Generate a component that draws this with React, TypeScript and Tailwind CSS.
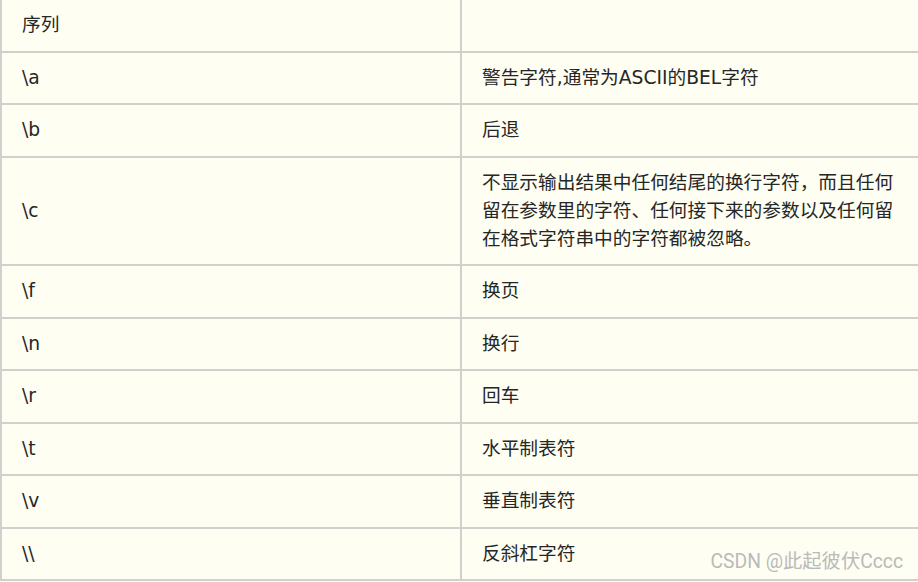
const rows: { seq: string; desc: string[] }[] = [
  { seq: '序列', desc: [''] },
  { seq: '\\a', desc: ['警告字符,通常为ASCII的BEL字符'] },
  { seq: '\\b', desc: ['后退'] },
  {
    seq: '\\c',
    desc: [
      '不显示输出结果中任何结尾的换行字符，而且任何',
      '留在参数里的字符、任何接下来的参数以及任何留',
      '在格式字符串中的字符都被忽略。',
    ],
  },
  { seq: '\\f', desc: ['换页'] },
  { seq: '\\n', desc: ['换行'] },
  { seq: '\\r', desc: ['回车'] },
  { seq: '\\t', desc: ['水平制表符'] },
  { seq: '\\v', desc: ['垂直制表符'] },
  { seq: '\\\\', desc: ['反斜杠字符'] },
];

export default function App() {
  return (
    <div className="relative w-[918px] h-[582px] overflow-hidden bg-[#fefef2] font-['DejaVu_Sans','Noto_Sans_CJK_SC',sans-serif] text-[18.7px] text-[#262626]">
      <div className="w-[1000px] border-l-2 border-[#d0d0cc]">
        {rows.map((row) => (
          <div key={row.seq} className="flex border-b-2 border-[#d0d0cc]">
            <div className="w-[460px] shrink-0 border-r-2 border-[#d0d0cc] px-5 py-[11.25px] leading-7 flex items-center">
              {row.seq}
            </div>
            <div className="flex-1 px-5 py-[11.25px] leading-7">
              {row.desc.map((line, i) => (
                <div key={i} className="min-h-7">
                  {line}
                </div>
              ))}
            </div>
          </div>
        ))}
      </div>

      {/* watermark */}
      <div className="absolute right-[15px] bottom-[5px] text-[19.3px] text-[#bababa] font-['Roboto','Noto_Sans_CJK_SC',sans-serif]">
        CSDN @此起彼伏Cccc
      </div>
    </div>
  );
}
